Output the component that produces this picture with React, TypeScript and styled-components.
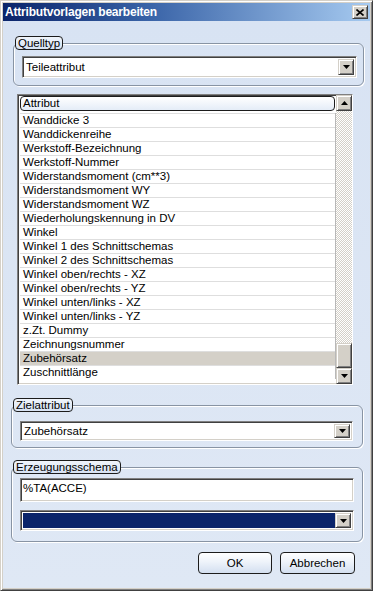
import styled, { createGlobalStyle, css } from "styled-components";

const GlobalStyle = createGlobalStyle`
  html, body {
    margin: 0;
    padding: 0;
  }
  body {
    width: 373px;
    height: 591px;
    overflow: hidden;
    font-family: "Liberation Sans", Arial, sans-serif;
    font-size: 11px;
    color: #000;
  }
  * {
    box-sizing: border-box;
  }
`;

const sunken = css`
  border: 1px solid;
  border-color: #808080 #ffffff #ffffff #808080;
  box-shadow: inset 1px 1px #404040, inset -1px -1px #d4d0c8;
`;

const raised = css`
  background: #d4d0c8;
  border: 1px solid;
  border-color: #d4d0c8 #404040 #404040 #d4d0c8;
  box-shadow: inset 1px 1px #ffffff, inset -1px -1px #808080;
`;

const Window = styled.div`
  width: 373px;
  height: 591px;
  display: flex;
  flex-direction: column;
  padding: 2px;
  background: #d4d0c8;
  border: 1px solid;
  border-color: #d4d0c8 #404040 #404040 #d4d0c8;
  box-shadow: inset 1px 1px #ffffff, inset -1px -1px #808080;
`;

const TitleBar = styled.div`
  height: 18px;
  display: flex;
  align-items: center;
  justify-content: space-between;
  padding: 0 2px 0 2px;
  background: linear-gradient(90deg, #0a246a 0%, #3a64a8 40%, #a6caf0 100%);
`;

const Title = styled.span`
  color: #ffffff;
  font-weight: bold;
  font-size: 12px;
  letter-spacing: -0.2px;
`;

const CloseButton = styled.div`
  ${raised};
  width: 16px;
  height: 14px;
  display: flex;
  align-items: center;
  justify-content: center;
`;

const Body = styled.div`
  flex: 1;
  display: flex;
  flex-direction: column;
  background: linear-gradient(180deg, #d8e3f3 0%, #dfe8f5 100%);
`;

type GroupProps = {
  $mt: number;
  $ml: number;
  $mr: number;
};

const Group = styled.fieldset<GroupProps>`
  margin: ${(p) => p.$mt}px ${(p) => p.$mr}px 0 ${(p) => p.$ml}px;
  padding: 0;
  min-width: 0;
  border: 1px solid #8894a4;
  border-radius: 6px;
  box-shadow: inset 1px 1px #ffffff, 1px 1px #ffffff;
`;

const Legend = styled.legend`
  margin-left: 1px;
  padding: 0 2px;
  height: 14px;
  line-height: 12px;
  font-size: 11.5px;
  border: 1px solid #1c1c1c;
  border-radius: 4px;
  background: linear-gradient(180deg, #f1f5fb 0%, #d6e2f3 100%);
`;

type GroupBodyProps = {
  $pt: number;
  $pr: number;
  $pb: number;
};

const GroupBody = styled.div<GroupBodyProps>`
  display: flex;
  flex-direction: column;
  gap: 8px;
  padding: ${(p) => p.$pt}px ${(p) => p.$pr}px ${(p) => p.$pb}px 8px;
`;

const Combo = styled.div<{ $h: number }>`
  ${sunken};
  height: ${(p) => p.$h}px;
  display: flex;
  align-items: stretch;
  padding: 2px;
  background: #ffffff;
`;

const ComboValue = styled.div<{ $dark?: boolean }>`
  flex: 1;
  display: flex;
  align-items: center;
  padding-left: 1px;
  font-size: 11.5px;
  background: ${(p) => (p.$dark ? "#0a246a" : "#ffffff")};
  color: ${(p) => (p.$dark ? "#ffffff" : "#000")};
`;

const ArrowButton = styled.div`
  ${raised};
  width: 16px;
  display: flex;
  align-items: center;
  justify-content: center;
`;

const TextBox = styled.div`
  ${sunken};
  height: 24px;
  padding: 3px 2px;
  background: #ffffff;
  font-size: 11.5px;
`;

const ListBox = styled.div`
  ${sunken};
  margin: 8px 17px 0 14px;
  height: 291px;
  display: flex;
  background: #ffffff;
`;

const ListMain = styled.div`
  flex: 1;
  display: flex;
  flex-direction: column;
  padding: 1px 0 0 1px;
  min-width: 0;
`;

const ListHeader = styled.div`
  height: 15px;
  margin: 0 1px 0 1px;
  padding-left: 2px;
  line-height: 13px;
  font-size: 11.5px;
  border: 1px solid #1c1c1c;
  border-radius: 4px;
  background: linear-gradient(180deg, #ffffff 0%, #e4ecf7 100%);
`;

const Rows = styled.div`
  margin: 2px 0 0 1px;
  border-right: 1px solid #b8b8b8;
`;

const Row = styled.div<{ $selected?: boolean }>`
  height: 14px;
  padding-left: 3px;
  line-height: 13px;
  font-size: 11.5px;
  white-space: nowrap;
  border-top: 1px solid #dedede;
  background: ${(p) => (p.$selected ? "#d4d0c8" : "#ffffff")};
`;

const ScrollBar = styled.div`
  width: 16px;
  display: flex;
  flex-direction: column;
`;

const ScrollButton = styled.div`
  ${raised};
  height: 16px;
  display: flex;
  align-items: center;
  justify-content: center;
`;

const Track = styled.div`
  flex: 1;
  background: conic-gradient(#ffffff 25%, #d4d0c8 0 50%, #ffffff 0 75%, #d4d0c8 0) 0 0 / 2px 2px;
`;

const Thumb = styled.div`
  ${raised};
  height: 25px;
`;

const ButtonRow = styled.div`
  display: flex;
  justify-content: flex-end;
  gap: 8px;
  margin-top: 10px;
  padding-right: 15px;
`;

const DialogButton = styled.button<{ $w: number }>`
  width: ${(p) => p.$w}px;
  height: 22px;
  padding: 0;
  font-family: "Liberation Sans", Arial, sans-serif;
  font-size: 11.5px;
  color: #000;
  border: 1px solid #1c1c1c;
  border-radius: 4px;
  background: linear-gradient(180deg, #ffffff 0%, #eef3fa 45%, #d3dff0 100%);
`;

function Arrow({ up }: { up?: boolean }) {
  return (
    <svg width="7" height="4" viewBox="0 0 7 4">
      <path d={up ? "M3.5 0 L7 4 L0 4 Z" : "M0 0 L7 0 L3.5 4 Z"} fill="#000" />
    </svg>
  );
}

const items = [
  "Wanddicke 3",
  "Wanddickenreihe",
  "Werkstoff-Bezeichnung",
  "Werkstoff-Nummer",
  "Widerstandsmoment (cm**3)",
  "Widerstandsmoment WY",
  "Widerstandsmoment WZ",
  "Wiederholungskennung in DV",
  "Winkel",
  "Winkel 1 des Schnittschemas",
  "Winkel 2 des Schnittschemas",
  "Winkel oben/rechts - XZ",
  "Winkel oben/rechts - YZ",
  "Winkel unten/links - XZ",
  "Winkel unten/links - YZ",
  "z.Zt. Dummy",
  "Zeichnungsnummer",
  "Zubehörsatz",
  "Zuschnittlänge",
];

export default function App() {
  return (
    <>
      <GlobalStyle />
      <Window>
        <TitleBar>
          <Title>Attributvorlagen bearbeiten</Title>
          <CloseButton>
            <svg width="8" height="7" viewBox="0 0 8 7">
              <path d="M0.5 0.5 L7.5 6.5 M7.5 0.5 L0.5 6.5" stroke="#000" strokeWidth="1.6" />
            </svg>
          </CloseButton>
        </TitleBar>
        <Body>
          <Group $mt={15} $ml={10} $mr={6}>
            <Legend>Quelltyp</Legend>
            <GroupBody $pt={6} $pr={6} $pb={7}>
              <Combo $h={22}>
                <ComboValue>Teileattribut</ComboValue>
                <ArrowButton>
                  <Arrow />
                </ArrowButton>
              </Combo>
            </GroupBody>
          </Group>

          <ListBox>
            <ListMain>
              <ListHeader>Attribut</ListHeader>
              <Rows>
                {items.map((item) => (
                  <Row key={item} $selected={item === "Zubehörsatz"}>
                    {item}
                  </Row>
                ))}
              </Rows>
            </ListMain>
            <ScrollBar>
              <ScrollButton>
                <Arrow up />
              </ScrollButton>
              <Track />
              <Thumb />
              <ScrollButton>
                <Arrow />
              </ScrollButton>
            </ScrollBar>
          </ListBox>

          <Group $mt={13} $ml={8} $mr={7}>
            <Legend>Zielattribut</Legend>
            <GroupBody $pt={9} $pr={9} $pb={6}>
              <Combo $h={20}>
                <ComboValue>Zubehörsatz</ComboValue>
                <ArrowButton>
                  <Arrow />
                </ArrowButton>
              </Combo>
            </GroupBody>
          </Group>

          <Group $mt={12} $ml={8} $mr={7}>
            <Legend>Erzeugungsschema</Legend>
            <GroupBody $pt={4} $pr={8} $pb={10}>
              <TextBox>%TA(ACCE)</TextBox>
              <Combo $h={21}>
                <ComboValue $dark />
                <ArrowButton>
                  <Arrow />
                </ArrowButton>
              </Combo>
            </GroupBody>
          </Group>

          <ButtonRow>
            <DialogButton $w={74}>OK</DialogButton>
            <DialogButton $w={75}>Abbrechen</DialogButton>
          </ButtonRow>
        </Body>
      </Window>
    </>
  );
}
